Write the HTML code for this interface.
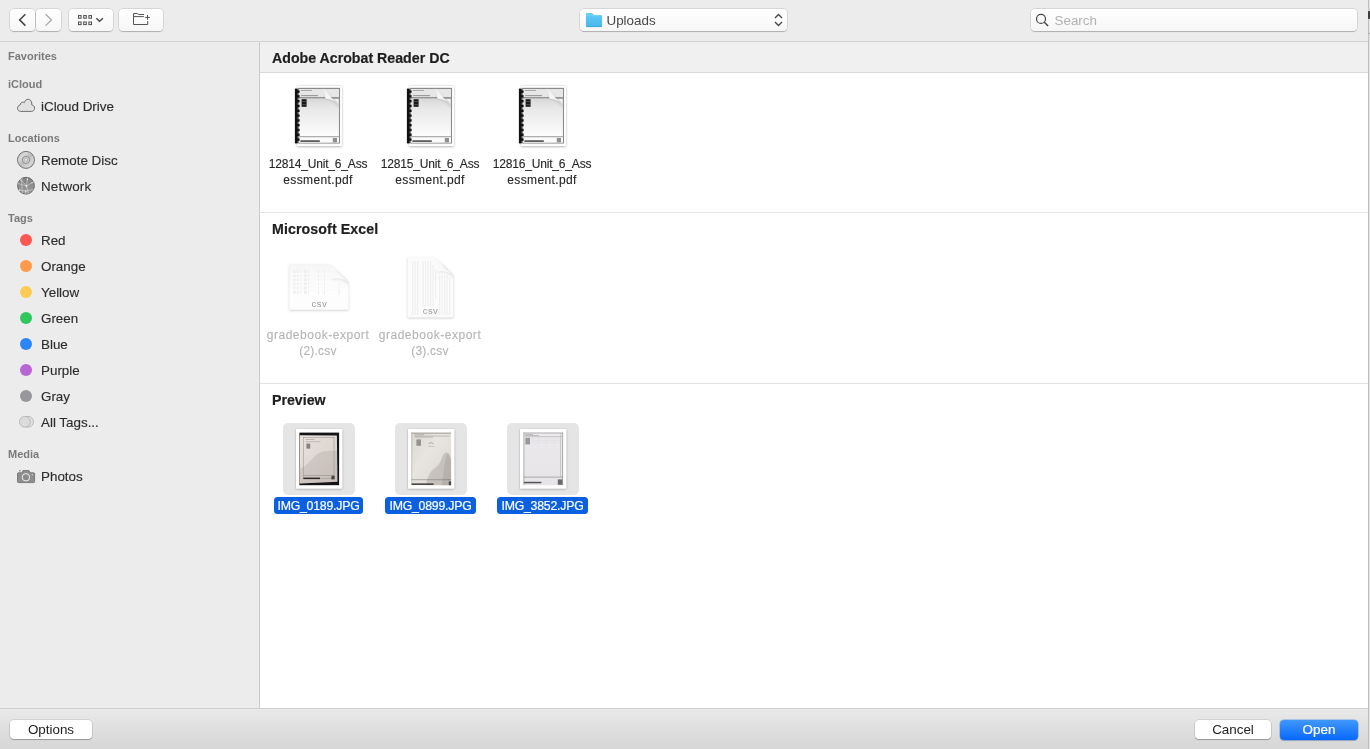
<!DOCTYPE html>
<html lang="en">
<head>
<meta charset="utf-8">
<title>Open</title>
<style>
*{box-sizing:border-box;margin:0;padding:0}
html,body{width:1370px;height:749px;overflow:hidden;background:#d8d8d8}
body{font-family:"Liberation Sans",sans-serif;color:#262626;position:relative;-webkit-font-smoothing:antialiased}
.abs{position:absolute}
#win{will-change:transform;position:absolute;left:0;top:0;width:1368px;height:749px;background:#ececec;overflow:hidden}
#edge{position:absolute;left:1368px;top:0;width:2px;height:749px;background:#e4e4e4;border-left:1px solid #c0c0c0}
/* toolbar */
#toolbar{position:absolute;left:0;top:0;width:1368px;height:41px;background:#ececec}
#tbline{position:absolute;left:0;top:41px;width:1368px;height:1px;background:#d4d4d4}
.tbtn{position:absolute;top:9px;height:22px;background:linear-gradient(#ffffff,#f6f6f6);border-radius:4px;
 box-shadow:0 0 0 .5px rgba(0,0,0,.15),0 .5px 1px rgba(0,0,0,.2)}
/* sidebar */
#sidebar{position:absolute;left:0;top:42px;width:259px;height:666px;background:#ececec}
#sbline{position:absolute;left:259px;top:42px;width:1px;height:666px;background:#cbcbcb}
.sh{position:absolute;left:8px;font-size:11px;font-weight:bold;color:#7a7a7a;line-height:14px;white-space:nowrap}
.si{position:absolute;left:41px;font-size:13.4px;color:#2d2d2d;line-height:16px;white-space:nowrap;margin-top:1px;-webkit-text-stroke:.14px #2d2d2d}
.dot{position:absolute;left:20px;width:12px;height:12px;border-radius:50%}
/* main */
#main{position:absolute;left:260px;top:42px;width:1108px;height:666px;background:#fff}
.gh{position:absolute;left:12px;font-size:14.2px;font-weight:bold;color:#1f1f1f;line-height:18px;white-space:nowrap;-webkit-text-stroke:.2px #1f1f1f}
.sep{position:absolute;left:0;width:1108px;height:1px;background:#e3e3e3}
.fl{position:absolute;width:112px;text-align:center;font-size:12px;line-height:16px;color:#262626;white-space:nowrap}
.fl i{font-style:normal;display:block}
.fl{-webkit-text-stroke:.12px #262626}
.fl.dim{color:#b4b4b4;-webkit-text-stroke:.1px #b4b4b4}
.sel{position:absolute;height:17px;border-radius:3.5px;background:#0a60df;color:#fff;font-size:12.3px;line-height:19px;text-align:center;white-space:nowrap;letter-spacing:-.22px;-webkit-text-stroke:.2px #fff;overflow:hidden}
/* bottom */
#bottom{position:absolute;left:0;top:708px;width:1368px;height:41px;background:linear-gradient(#e9e9e9,#d6d6d6);border-top:1px solid #cfcfcf}
.bbtn{position:absolute;top:720px;height:19px;border-radius:4px;background:#fff;font-size:13.4px;line-height:19px;text-align:center;color:#222;
 box-shadow:0 0 0 0.5px rgba(0,0,0,.16),0 1px 1px rgba(0,0,0,.25)}
.bbtn.pri{top:719.5px;height:20px;line-height:20px;background:linear-gradient(#4198fb,#0768fc);color:#fff;box-shadow:0 0 0 .5px rgba(0,90,230,.45),0 .5px 1px rgba(0,0,0,.15);-webkit-text-stroke:.2px #fff}
</style>
</head>
<body>
<div id="win">
  <div id="toolbar">
    <div class="tbtn" style="left:10px;width:25px"></div>
    <div class="tbtn" style="left:36px;width:25px"></div>
    <div class="tbtn" style="left:69px;width:44px"></div>
    <div class="tbtn" style="left:119px;width:44px"></div>
    <div class="tbtn" style="left:580px;width:207px"></div>
    <div class="tbtn" style="left:1031px;width:326px"></div>
    <svg class="abs" style="left:0;top:0" width="180" height="41" viewBox="0 0 180 41" fill="none" stroke-linecap="butt" stroke-linejoin="miter">
      <path d="M25.400 14.200 L19.600 19.900 L25.400 25.600" stroke="#444" stroke-width="1.500"/>
      <path d="M45.600 14.200 L51.400 19.900 L45.600 25.600" stroke="#a6a6a6" stroke-width="1.300"/>
      <g stroke="#4a4a4a" stroke-width="1">
        <rect x="78.500" y="15.600" width="2.600" height="2.600"/><rect x="83.700" y="15.600" width="2.600" height="2.600"/><rect x="88.900" y="15.600" width="2.600" height="2.600"/>
        <rect x="78.500" y="22" width="2.600" height="2.600"/><rect x="83.700" y="22" width="2.600" height="2.600"/><rect x="88.900" y="22" width="2.600" height="2.600"/>
      </g>
      <path d="M96.300 18.300 L99.600 21.300 L102.900 18.300" stroke="#4a4a4a" stroke-width="1.500"/>
      <g stroke="#555" stroke-width="1">
        <path d="M144 14.500 H138.600 L137.400 13.500 H133.500 V24.500 H147.700 V21"/>
        <path d="M134 16.600 H143.900"/>
        <path d="M145.100 17.400 H149.900 M147.500 15 V19.800"/>
      </g>
    </svg>
    <svg class="abs" style="left:580px;top:0" width="210" height="41" viewBox="0 0 210 41">
      <defs><linearGradient id="fg" x1="0" y1="0" x2="0" y2="1"><stop offset="0" stop-color="#62cdf8"/><stop offset="1" stop-color="#47b6ea"/></linearGradient></defs>
      <path d="M6 14 Q6 12.900 7.100 12.900 H11.300 Q12 12.900 12.500 13.500 L13.400 14.600 Q13.800 15.100 14.600 15.100 H21 Q22 15.100 22 16.100 V26 Q22 27 21 27 H7 Q6 27 6 26 Z" fill="url(#fg)"/>
      <path d="M6 15.600 H22" stroke="#7fd8fb" stroke-width=".6"/>
      <path d="M6.200 26.600 H21.800" stroke="#3aa4da" stroke-width=".8"/>
      <g fill="none" stroke="#484848" stroke-width="1.400"><path d="M195 17.900 L198.500 14.400 L202 17.900"/><path d="M195 22.100 L198.500 25.600 L202 22.100"/></g>
    </svg>
    <div class="abs" style="left:606.500px;top:13px;font-size:13.400px;line-height:16px;color:#484848;white-space:nowrap">Uploads</div>
    <svg class="abs" style="left:1031px;top:0" width="30" height="41" viewBox="0 0 30 41" fill="none" stroke="#444" stroke-width="1.200">
      <circle cx="10" cy="18.900" r="4.500"/><path d="M13.300 22.200 L17.100 26" stroke-width="1.400"/>
    </svg>
    <div class="abs" style="left:1054.500px;top:13px;font-size:13.400px;line-height:16px;color:#b2b2b2;white-space:nowrap">Search</div>
  </div>
  <div id="tbline"></div>

  <div id="sidebar"></div>
  <div id="sbline"></div>
  <!-- sidebar icons -->
  <svg class="abs" style="left:12px;top:94px" width="30" height="104" viewBox="12 94 30 104">
    <defs>
      <linearGradient id="dg" x1="0" y1="0" x2="1" y2="1"><stop offset="0" stop-color="#b4b4b4"/><stop offset=".28" stop-color="#d8d8d8"/><stop offset=".5" stop-color="#bcbcbc"/><stop offset=".75" stop-color="#d6d6d6"/><stop offset="1" stop-color="#b0b0b0"/></linearGradient>
      <linearGradient id="ng" x1="0" y1="0" x2="0" y2="1"><stop offset="0" stop-color="#808080"/><stop offset="1" stop-color="#9c9c9c"/></linearGradient>
    </defs>
    <path transform="translate(17,98.800)" d="M3.600 12.600 C1.500 12.600 .5 11 .5 9.500 C.5 7.800 1.600 6.500 3.100 6.200 C3.200 4.500 4.500 3.400 5.900 3.400 C6.500 3.400 7 3.500 7.400 3.800 C7.900 1.700 9.500 .5 11.100 .5 C13.300 .5 14.800 2.400 14.800 5.200 C14.800 5.500 14.800 5.700 14.700 6 C16.500 6.400 17.600 7.800 17.600 9.400 C17.600 11.200 16.300 12.600 14.400 12.600 Z" fill="#e2e2e2" stroke="#6f6f6f" stroke-width="1"/>
    <circle cx="26" cy="159.900" r="8.500" fill="url(#dg)" stroke="#747474" stroke-width="1"/>
    <circle cx="26" cy="159.900" r="3.600" fill="#d2d2d2" stroke="#858585" stroke-width=".9"/>
    <circle cx="26" cy="159.900" r="1.500" fill="#f3f3f3" stroke="#9a9a9a" stroke-width=".7"/>
    <circle cx="26" cy="185.700" r="8.400" fill="url(#ng)" stroke="#6c6c6c" stroke-width="1"/>
    <g stroke="#d6d6d6" stroke-width=".7" fill="none" opacity=".9">
      <path d="M27.500 177.500 L26.500 186 L28.500 193.600"/><path d="M18 183.500 L26.500 186 L34 181.500"/><path d="M20.500 179.500 L26.500 186"/><path d="M18.500 190 L25.800 191 L33.500 189.500"/><path d="M25.800 191 L25.600 194"/><path d="M22 178.200 Q21 185 22.500 193"/>
    </g>
    <g fill="#ececec"><circle cx="26.500" cy="186" r=".9"/><circle cx="27.500" cy="179.500" r=".7"/><circle cx="25.800" cy="191" r=".8"/><circle cx="20.800" cy="180" r=".6"/><circle cx="32" cy="182.700" r=".6"/><circle cx="19.500" cy="189.900" r=".6"/></g>
  </svg>
  <svg class="abs" style="left:12px;top:410px" width="30" height="80" viewBox="12 410 30 80">
    <circle cx="28.100" cy="421.800" r="5.400" fill="#e0e0e0" stroke="#b4b4b4" stroke-width=".9"/>
    <circle cx="24.900" cy="421.800" r="5.400" fill="#dcdcdc" stroke="#b4b4b4" stroke-width=".9"/>
    <path d="M18.400 472.800 H21.800 L23 470.500 H29 L30.200 472.800 H33.700 Q34.600 472.800 34.600 473.700 V481.700 Q34.600 482.600 33.700 482.600 H18.400 Q17.500 482.600 17.500 481.700 V473.700 Q17.500 472.800 18.400 472.800 Z" fill="#8e8e8e" stroke="#6c6c6c" stroke-width=".8"/>
    <rect x="19" y="470.400" width="1.800" height=".9" fill="#6c6c6c"/>
    <circle cx="25.900" cy="477.300" r="3.700" fill="#8a8a8a" stroke="#f2f2f2" stroke-width="1"/>
    <circle cx="32.300" cy="474.700" r=".6" fill="#e8e8e8"/>
  </svg>
  <!-- sidebar items (page coords) -->
  <div class="sh" style="top:49px">Favorites</div>
  <div class="sh" style="top:77px">iCloud</div>
  <div class="si" style="top:98px">iCloud Drive</div>
  <div class="sh" style="top:131px">Locations</div>
  <div class="si" style="top:152px">Remote Disc</div>
  <div class="si" style="top:178px;letter-spacing:.18px">Network</div>
  <div class="sh" style="top:211px">Tags</div>
  <div class="dot" style="top:234px;background:#fc5753"></div><div class="si" style="top:232px">Red</div>
  <div class="dot" style="top:260px;background:#fd9a4b"></div><div class="si" style="top:258px">Orange</div>
  <div class="dot" style="top:286px;background:#fdcb55"></div><div class="si" style="top:284px">Yellow</div>
  <div class="dot" style="top:312px;background:#30c75c"></div><div class="si" style="top:310px">Green</div>
  <div class="dot" style="top:338px;background:#2b85f7"></div><div class="si" style="top:336px">Blue</div>
  <div class="dot" style="top:364px;background:#b865d6"></div><div class="si" style="top:362px">Purple</div>
  <div class="dot" style="top:390px;background:#98989c"></div><div class="si" style="top:388px">Gray</div>
  <div class="si" style="top:414px">All Tags...</div>
  <div class="sh" style="top:447px">Media</div>
  <div class="si" style="top:468px">Photos</div>

  <div id="main"></div>
  <!-- group 1 -->
  <div class="abs" style="left:260px;top:42px;width:1108px;height:30px;background:#f0f0f0"></div>
  <div class="abs" style="left:260px;top:72px;width:1108px;height:1px;background:#d9d9d9"></div>
  <div class="gh" style="left:272px;top:49px">Adobe Acrobat Reader DC</div>
  <svg class="abs" style="left:291px;top:82px" width="56" height="70" viewBox="0 0 56 70">
    <defs>
      <linearGradient id="pg318" x1="0" y1="0" x2="0" y2="1"><stop offset="0" stop-color="#d9d9d9"/><stop offset=".3" stop-color="#e9e9e9"/><stop offset="1" stop-color="#fdfdfd"/></linearGradient>
      <linearGradient id="cl318" x1="0" y1="1" x2="1" y2="0"><stop offset="0" stop-color="#ffffff"/><stop offset=".45" stop-color="#f4f4f4"/><stop offset="1" stop-color="#cfcfcf"/></linearGradient>
      <filter id="sh318" x="-20%" y="-20%" width="140%" height="140%"><feGaussianBlur stdDeviation="1"/></filter>
    </defs>
    <rect x="6" y="4.300" width="45" height="60.500" fill="#8e8e8e" opacity=".7" filter="url(#sh318)"/>
    <rect x="6" y="4" width="45" height="60" fill="#fdfdfd"/>
    <rect x="7.6" y="6.4" width="40.8" height="54.6" fill="#f4f4f4" stroke="#858585" stroke-width="1.1"/>
    <rect x="8.2" y="7" width="39.6" height="8.6" fill="#e6e6e6"/>
    <rect x="10" y="8.2" width="11" height=".8" fill="#9a9a9a"/>
    <rect x="10" y="13.2" width="17" height=".9" fill="#8a8a8a"/>
    <rect x="8.2" y="15.3" width="39.6" height="1.3" fill="#6f6f6f"/>
    <path d="M8.6 16.6 H39 Q47.6 17.6 47.6 27 V54.4 H8.6 Z" fill="url(#pg318)"/>
    <path d="M33 16.8 Q43 17.4 48.6 26.4 L48.6 23 L36 12 Z" fill="#9a9a9a" opacity=".45" filter="url(#sh318)"/>
    <path d="M31.6 5.4 Q34.4 8 34.2 16.4 Q43.4 16.6 49 25.4 Z" fill="url(#cl318)"/>
    <rect x="10.6" y="17.2" width="5" height="7.6" fill="#1a1a1a"/>
    <rect x="10.6" y="19.4" width="5" height=".5" fill="#777"/><rect x="10.6" y="22" width="5" height=".5" fill="#777"/>
    <rect x="8.2" y="54.4" width="39.6" height="1" fill="#7d7d7d"/>
    <rect x="8.2" y="55.4" width="39.6" height="5.2" fill="#fbfbfb"/>
    <rect x="9.4" y="58.2" width="19.4" height="1.8" fill="#5e5e5e"/>
    <rect x="41.8" y="56" width="4.2" height="4.4" fill="#8f8f8f"/>
    <rect x="3.9" y="6.6" width="2.9" height="54.8" fill="#111"/>
    <g fill="#111"><rect x="6" y="8.4" width="2.6" height="2.4"/><rect x="6" y="13.2" width="2.6" height="2.4"/><rect x="6" y="18" width="2.6" height="2.4"/><rect x="6" y="22.8" width="2.6" height="2.4"/><rect x="6" y="27.6" width="2.6" height="2.4"/><rect x="6" y="32.4" width="2.6" height="2.4"/><rect x="6" y="37.2" width="2.6" height="2.4"/><rect x="6" y="42" width="2.6" height="2.4"/><rect x="6" y="46.8" width="2.6" height="2.4"/><rect x="6" y="51.6" width="2.6" height="2.4"/><rect x="6" y="56.4" width="2.6" height="2.4"/></g>
  </svg>
  <svg class="abs" style="left:403px;top:82px" width="56" height="70" viewBox="0 0 56 70">
    <defs>
      <linearGradient id="pg430" x1="0" y1="0" x2="0" y2="1"><stop offset="0" stop-color="#d9d9d9"/><stop offset=".3" stop-color="#e9e9e9"/><stop offset="1" stop-color="#fdfdfd"/></linearGradient>
      <linearGradient id="cl430" x1="0" y1="1" x2="1" y2="0"><stop offset="0" stop-color="#ffffff"/><stop offset=".45" stop-color="#f4f4f4"/><stop offset="1" stop-color="#cfcfcf"/></linearGradient>
      <filter id="sh430" x="-20%" y="-20%" width="140%" height="140%"><feGaussianBlur stdDeviation="1"/></filter>
    </defs>
    <rect x="6" y="4.300" width="45" height="60.500" fill="#8e8e8e" opacity=".7" filter="url(#sh430)"/>
    <rect x="6" y="4" width="45" height="60" fill="#fdfdfd"/>
    <rect x="7.6" y="6.4" width="40.8" height="54.6" fill="#f4f4f4" stroke="#858585" stroke-width="1.1"/>
    <rect x="8.2" y="7" width="39.6" height="8.6" fill="#e6e6e6"/>
    <rect x="10" y="8.2" width="11" height=".8" fill="#9a9a9a"/>
    <rect x="10" y="13.2" width="17" height=".9" fill="#8a8a8a"/>
    <rect x="8.2" y="15.3" width="39.6" height="1.3" fill="#6f6f6f"/>
    <path d="M8.6 16.6 H39 Q47.6 17.6 47.6 27 V54.4 H8.6 Z" fill="url(#pg430)"/>
    <path d="M33 16.8 Q43 17.4 48.6 26.4 L48.6 23 L36 12 Z" fill="#9a9a9a" opacity=".45" filter="url(#sh430)"/>
    <path d="M31.6 5.4 Q34.4 8 34.2 16.4 Q43.4 16.6 49 25.4 Z" fill="url(#cl430)"/>
    <rect x="10.6" y="17.2" width="5" height="7.6" fill="#1a1a1a"/>
    <rect x="10.6" y="19.4" width="5" height=".5" fill="#777"/><rect x="10.6" y="22" width="5" height=".5" fill="#777"/>
    <rect x="8.2" y="54.4" width="39.6" height="1" fill="#7d7d7d"/>
    <rect x="8.2" y="55.4" width="39.6" height="5.2" fill="#fbfbfb"/>
    <rect x="9.4" y="58.2" width="19.4" height="1.8" fill="#5e5e5e"/>
    <rect x="41.8" y="56" width="4.2" height="4.4" fill="#8f8f8f"/>
    <rect x="3.9" y="6.6" width="2.9" height="54.8" fill="#111"/>
    <g fill="#111"><rect x="6" y="8.4" width="2.6" height="2.4"/><rect x="6" y="13.2" width="2.6" height="2.4"/><rect x="6" y="18" width="2.6" height="2.4"/><rect x="6" y="22.8" width="2.6" height="2.4"/><rect x="6" y="27.6" width="2.6" height="2.4"/><rect x="6" y="32.4" width="2.6" height="2.4"/><rect x="6" y="37.2" width="2.6" height="2.4"/><rect x="6" y="42" width="2.6" height="2.4"/><rect x="6" y="46.8" width="2.6" height="2.4"/><rect x="6" y="51.6" width="2.6" height="2.4"/><rect x="6" y="56.4" width="2.6" height="2.4"/></g>
  </svg>
  <svg class="abs" style="left:515px;top:82px" width="56" height="70" viewBox="0 0 56 70">
    <defs>
      <linearGradient id="pg542" x1="0" y1="0" x2="0" y2="1"><stop offset="0" stop-color="#d9d9d9"/><stop offset=".3" stop-color="#e9e9e9"/><stop offset="1" stop-color="#fdfdfd"/></linearGradient>
      <linearGradient id="cl542" x1="0" y1="1" x2="1" y2="0"><stop offset="0" stop-color="#ffffff"/><stop offset=".45" stop-color="#f4f4f4"/><stop offset="1" stop-color="#cfcfcf"/></linearGradient>
      <filter id="sh542" x="-20%" y="-20%" width="140%" height="140%"><feGaussianBlur stdDeviation="1"/></filter>
    </defs>
    <rect x="6" y="4.300" width="45" height="60.500" fill="#8e8e8e" opacity=".7" filter="url(#sh542)"/>
    <rect x="6" y="4" width="45" height="60" fill="#fdfdfd"/>
    <rect x="7.6" y="6.4" width="40.8" height="54.6" fill="#f4f4f4" stroke="#858585" stroke-width="1.1"/>
    <rect x="8.2" y="7" width="39.6" height="8.6" fill="#e6e6e6"/>
    <rect x="10" y="8.2" width="11" height=".8" fill="#9a9a9a"/>
    <rect x="10" y="13.2" width="17" height=".9" fill="#8a8a8a"/>
    <rect x="8.2" y="15.3" width="39.6" height="1.3" fill="#6f6f6f"/>
    <path d="M8.6 16.6 H39 Q47.6 17.6 47.6 27 V54.4 H8.6 Z" fill="url(#pg542)"/>
    <path d="M33 16.8 Q43 17.4 48.6 26.4 L48.6 23 L36 12 Z" fill="#9a9a9a" opacity=".45" filter="url(#sh542)"/>
    <path d="M31.6 5.4 Q34.4 8 34.2 16.4 Q43.4 16.6 49 25.4 Z" fill="url(#cl542)"/>
    <rect x="10.6" y="17.2" width="5" height="7.6" fill="#1a1a1a"/>
    <rect x="10.6" y="19.4" width="5" height=".5" fill="#777"/><rect x="10.6" y="22" width="5" height=".5" fill="#777"/>
    <rect x="8.2" y="54.4" width="39.6" height="1" fill="#7d7d7d"/>
    <rect x="8.2" y="55.4" width="39.6" height="5.2" fill="#fbfbfb"/>
    <rect x="9.4" y="58.2" width="19.4" height="1.8" fill="#5e5e5e"/>
    <rect x="41.8" y="56" width="4.2" height="4.4" fill="#8f8f8f"/>
    <rect x="3.9" y="6.6" width="2.9" height="54.8" fill="#111"/>
    <g fill="#111"><rect x="6" y="8.4" width="2.6" height="2.4"/><rect x="6" y="13.2" width="2.6" height="2.4"/><rect x="6" y="18" width="2.6" height="2.4"/><rect x="6" y="22.8" width="2.6" height="2.4"/><rect x="6" y="27.6" width="2.6" height="2.4"/><rect x="6" y="32.4" width="2.6" height="2.4"/><rect x="6" y="37.2" width="2.6" height="2.4"/><rect x="6" y="42" width="2.6" height="2.4"/><rect x="6" y="46.8" width="2.6" height="2.4"/><rect x="6" y="51.6" width="2.6" height="2.4"/><rect x="6" y="56.4" width="2.6" height="2.4"/></g>
  </svg>
  <div class="fl" style="left:262px;top:155.5px"><i style="letter-spacing:-.17px">12814_Unit_6_Ass</i><i style="letter-spacing:.38px">essment.pdf</i></div>
  <div class="fl" style="left:374px;top:155.5px"><i style="letter-spacing:-.17px">12815_Unit_6_Ass</i><i style="letter-spacing:.38px">essment.pdf</i></div>
  <div class="fl" style="left:486px;top:155.5px"><i style="letter-spacing:-.17px">12816_Unit_6_Ass</i><i style="letter-spacing:.38px">essment.pdf</i></div>
  <!-- group 2 -->
  <div class="sep" style="left:260px;top:212px"></div>
  <div class="gh" style="left:272px;top:220px;letter-spacing:.1px">Microsoft Excel</div>
  <!-- csv icons -->
  <svg class="abs" style="left:285px;top:261px" width="68" height="56" viewBox="0 0 68 56">
    <defs><filter id="cs1" x="-20%" y="-20%" width="140%" height="140%"><feGaussianBlur stdDeviation="1"/></filter>
    <linearGradient id="cg1" x1="0" y1="1" x2="1" y2="0"><stop offset="0" stop-color="#fff"/><stop offset=".6" stop-color="#f6f6f6"/><stop offset="1" stop-color="#e6e6e6"/></linearGradient>
    <linearGradient id="cb1" x1="0" y1="0" x2="0" y2="1"><stop offset="0" stop-color="#f6f6f6"/><stop offset=".6" stop-color="#fdfdfd"/></linearGradient></defs>
    <path d="M4.500 3.500 H41 Q46 3.500 49 6.500 L60 17.500 Q63.500 21 63.500 27 V48.800 H4.500 Z" fill="#9c9c9c" opacity=".55" filter="url(#cs1)" transform="translate(0,.7)"/>
    <path d="M4.300 3.200 H41 Q46 3.200 49 6.200 L60.200 17.300 Q63.700 20.800 63.700 27 V48.800 H4.300 Z" fill="url(#cb1)"/>
    <g fill="#eeeeee"><rect x="8.500" y="9" width="2" height="24"/><rect x="12" y="9" width="1.500" height="24"/><rect x="15.500" y="9" width="1" height="24"/><rect x="19" y="9" width="2.500" height="24"/><rect x="23" y="9" width="1" height="24"/>
    <rect x="33" y="9" width="1" height="24"/><rect x="39" y="9" width="1" height="24"/><rect x="53.500" y="22" width="1" height="12"/></g>
    <g fill="#fbfbfb"><rect x="8" y="12" width="50" height="1.600"/><rect x="8" y="16" width="50" height="1.600"/><rect x="8" y="20" width="50" height="1.600"/><rect x="8" y="24" width="50" height="1.600"/><rect x="8" y="28" width="50" height="1.600"/></g>
    <path d="M47 19 Q57 17 63.700 24 L63.700 21 L52 10 Z" fill="#bbb" opacity=".35" filter="url(#cs1)"/>
    <path d="M43.600 3.600 Q48.600 8 47.700 17.400 Q57 16.400 62.800 21 Z" fill="url(#cg1)"/>
    <text x="34.400" y="45.700" font-family="Liberation Sans, sans-serif" font-size="9.600" fill="#9d9d9d" text-anchor="middle" letter-spacing=".4">csv</text>
  </svg>
  <svg class="abs" style="left:403px;top:253px" width="56" height="70" viewBox="0 0 56 70">
    <defs><filter id="cs2" x="-20%" y="-20%" width="140%" height="140%"><feGaussianBlur stdDeviation="1"/></filter>
    <linearGradient id="cg2" x1="0" y1="1" x2="1" y2="0"><stop offset="0" stop-color="#fff"/><stop offset=".6" stop-color="#f6f6f6"/><stop offset="1" stop-color="#e6e6e6"/></linearGradient></defs>
    <path d="M4.600 4.500 H27.500 Q32 4.500 35 7.500 L47 19.300 Q50.400 22.800 50.400 28 V64.600 H4.600 Z" fill="#9c9c9c" opacity=".55" filter="url(#cs2)" transform="translate(0,.7)"/>
    <path d="M4.500 4.200 H27.500 Q32 4.200 35 7.200 L47.100 19 Q50.500 22.500 50.500 28 V64.500 H4.500 Z" fill="#fbfbfb"/>
    <g fill="#f0f0f0"><rect x="9" y="8" width="1.200" height="54"/><rect x="11.500" y="8" width="1.200" height="54"/><rect x="14" y="8" width="1.200" height="54"/><rect x="19.500" y="8" width="1.200" height="54"/><rect x="22" y="8" width="1.200" height="54"/><rect x="24.500" y="8" width="1.200" height="54"/><rect x="27" y="8" width="1.200" height="54"/><rect x="29.500" y="12" width="1.200" height="50"/><rect x="32" y="16" width="1.200" height="30"/><rect x="36" y="22" width="1.200" height="40"/><rect x="38.500" y="22" width="1.200" height="40"/><rect x="41" y="22" width="1.200" height="40"/><rect x="43.500" y="22" width="1.200" height="40"/><rect x="46" y="24" width="1.200" height="38"/></g>
    <path d="M34.500 20 Q44 18 50.500 25 L50.500 22 L39 11 Z" fill="#bbb" opacity=".35" filter="url(#cs2)"/>
    <path d="M30.200 4.600 Q36 9 35.100 18.500 Q44 17.500 49.700 22.200 Z" fill="url(#cg2)"/>
    <rect x="19" y="54" width="16" height="7.500" fill="#fbfbfb"/>
    <text x="27.500" y="61" font-family="Liberation Sans, sans-serif" font-size="9.600" fill="#9d9d9d" text-anchor="middle" letter-spacing=".4">csv</text>
  </svg>
  <div class="fl dim" style="left:262px;top:326.5px"><i style="letter-spacing:.53px">gradebook-export</i><i style="letter-spacing:.23px">(2).csv</i></div>
  <div class="fl dim" style="left:374px;top:326.5px"><i style="letter-spacing:.53px">gradebook-export</i><i style="letter-spacing:.23px">(3).csv</i></div>
  <!-- group 3 -->
  <div class="sep" style="left:260px;top:383px"></div>
  <div class="gh" style="left:272px;top:391px">Preview</div>
  <div class="abs" style="left:283px;top:423px;width:72px;height:72px;border-radius:5px;background:#e5e5e5"></div>
  <div class="abs" style="left:395px;top:423px;width:72px;height:72px;border-radius:5px;background:#e5e5e5"></div>
  <div class="abs" style="left:507px;top:423px;width:72px;height:72px;border-radius:5px;background:#e5e5e5"></div>
  <svg class="abs" style="left:292.8px;top:425.500px" width="53" height="67" viewBox="-3 -3 53 67">
    <defs>
      <linearGradient id="pa" x1="0" y1="0" x2="1" y2="1"><stop offset="0" stop-color="#e9e3df"/><stop offset="1" stop-color="#d3cbc6"/></linearGradient>
      <linearGradient id="pb" x1="0" y1="0" x2="1" y2="1"><stop offset="0" stop-color="#dcd7d1"/><stop offset=".4" stop-color="#e8e5e1"/><stop offset="1" stop-color="#d9d4cf"/></linearGradient>
      <linearGradient id="pc" x1="0" y1="0" x2="0" y2="1"><stop offset="0" stop-color="#ebe9eb"/><stop offset="1" stop-color="#e6e4e6"/></linearGradient>
      <filter id="psa" x="-20%" y="-20%" width="140%" height="140%"><feGaussianBlur stdDeviation=".9"/></filter>
    </defs>
    <rect x="0" y=".6" width="46.400" height="59.700" fill="#7c7c7c" opacity=".6" filter="url(#psa)"/>
    <rect x="0" y="0" width="46.400" height="59.700" fill="#fff"/>
    <rect x="3.400" y="3.600" width="39.700" height="52.600" fill="#141416"/>
    <path d="M3.800 6.200 L40.900 6.600 L41.400 52.800 L3.600 54.400 Z" fill="url(#pa)"/>
    <path d="M3.700 40 Q10 37 17 29 Q22 23 30 22 Q36 21.500 41 22 L41.400 52.800 L3.600 54.400 Z" fill="#aca29d" opacity=".32"/>
    <rect x="7.600" y="8.600" width="30.400" height="41" fill="none" stroke="#8d8580" stroke-width=".45"/>
    <rect x="10.400" y="14.600" width="3.800" height="5" fill="#7d7671" opacity=".9"/>
    <rect x="9.400" y="10" width="9" height=".5" fill="#948c87"/><rect x="9.400" y="12.600" width="15" height=".5" fill="#9d9590"/>
    <rect x="7.600" y="46.400" width="30.400" height=".45" fill="#857d78"/>
    <rect x="7.400" y="48.600" width="16.600" height="1.500" fill="#2a2624"/>
    <rect x="35.400" y="46.800" width="3.200" height="3.600" fill="#4a4542"/>
  </svg>
  <svg class="abs" style="left:404.8px;top:425.500px" width="53" height="67" viewBox="-3 -3 53 67">
    <defs>
      <linearGradient id="pa" x1="0" y1="0" x2="1" y2="1"><stop offset="0" stop-color="#e9e3df"/><stop offset="1" stop-color="#d3cbc6"/></linearGradient>
      <linearGradient id="pb" x1="0" y1="0" x2="1" y2="1"><stop offset="0" stop-color="#dcd7d1"/><stop offset=".4" stop-color="#e8e5e1"/><stop offset="1" stop-color="#d9d4cf"/></linearGradient>
      <linearGradient id="pc" x1="0" y1="0" x2="0" y2="1"><stop offset="0" stop-color="#ebe9eb"/><stop offset="1" stop-color="#e6e4e6"/></linearGradient>
      <filter id="psb" x="-20%" y="-20%" width="140%" height="140%"><feGaussianBlur stdDeviation=".9"/></filter>
    </defs>
    <rect x="0" y=".6" width="46.400" height="59.700" fill="#7c7c7c" opacity=".6" filter="url(#psb)"/>
    <rect x="0" y="0" width="46.400" height="59.700" fill="#fff"/>
    <rect x="3.400" y="3.600" width="39.700" height="52.600" fill="url(#pb)"/>
    <rect x="3.400" y="3.600" width="39.700" height="1.200" fill="#9d9893" opacity=".8"/>
    <rect x="3.400" y="3.600" width=".8" height="52.600" fill="#a9a49f" opacity=".7"/>
    <path d="M18 56.200 Q19.500 44 27 39 Q31.500 36 33.500 30 Q36 22 39.500 24 Q42.500 27 43.100 32 V56.200 Z" fill="#8b8480" opacity=".30"/>
    <path d="M36 40 Q38 22 41 24 L43.100 30 V56.200 H34 Z" fill="#7d7672" opacity=".18"/>
    <rect x="6.400" y="6.800" width="35.500" height=".45" fill="#8a8580"/>
    <rect x="7" y="5.600" width="9" height=".5" fill="#8c8580"/><rect x="7" y="7.800" width="18" height=".5" fill="#958f8a"/>
    <rect x="8.400" y="10.400" width="4.600" height="6.400" fill="#8a8580" opacity=".85"/>
    <path d="M20.500 14.800 q2.500 -2.500 5 -.2" fill="none" stroke="#77726e" stroke-width=".5"/>
    <rect x="20.400" y="17.400" width="6" height=".4" fill="#9d9893"/>
    <rect x="3.400" y="50.600" width="39.700" height=".5" fill="#726d69"/>
    <rect x="3.600" y="54.400" width="22" height="1.500" fill="#3f3b38"/>
    <rect x="40.800" y="52.400" width="2.300" height="3.800" fill="#4b4744"/>
  </svg>
  <svg class="abs" style="left:516.8px;top:425.500px" width="53" height="67" viewBox="-3 -3 53 67">
    <defs>
      <linearGradient id="pa" x1="0" y1="0" x2="1" y2="1"><stop offset="0" stop-color="#e9e3df"/><stop offset="1" stop-color="#d3cbc6"/></linearGradient>
      <linearGradient id="pb" x1="0" y1="0" x2="1" y2="1"><stop offset="0" stop-color="#dcd7d1"/><stop offset=".4" stop-color="#e8e5e1"/><stop offset="1" stop-color="#d9d4cf"/></linearGradient>
      <linearGradient id="pc" x1="0" y1="0" x2="0" y2="1"><stop offset="0" stop-color="#ebe9eb"/><stop offset="1" stop-color="#e6e4e6"/></linearGradient>
      <filter id="psc" x="-20%" y="-20%" width="140%" height="140%"><feGaussianBlur stdDeviation=".9"/></filter>
    </defs>
    <rect x="0" y=".6" width="46.400" height="59.700" fill="#7c7c7c" opacity=".6" filter="url(#psc)"/>
    <rect x="0" y="0" width="46.400" height="59.700" fill="#fff"/>
    <rect x="3.400" y="3.600" width="39.700" height="52.600" fill="url(#pc)"/>
    <rect x="3.400" y="3.600" width="1" height="52.600" fill="#8c8a8e" opacity=".6"/>
    <rect x="42.300" y="3.600" width=".8" height="52.600" fill="#77757a" opacity=".7"/>
    <rect x="3.400" y="3.600" width="39.700" height=".8" fill="#8f8d91" opacity=".8"/>
    <rect x="4.600" y="7.600" width="37.500" height=".45" fill="#9a989c"/>
    <rect x="40.400" y="4" width=".45" height="44" fill="#a5a3a7"/>
    <rect x="5.400" y="8.800" width="4.600" height="6.600" fill="#8a888f" opacity=".85"/>
    <rect x="5" y="5.200" width="8" height=".5" fill="#908e92"/><rect x="5" y="6.400" width="14" height=".5" fill="#9a989c"/>
    <g fill="#dddbdf"><rect x="11" y="9.400" width="29" height=".45"/><rect x="11" y="11.400" width="29" height=".45"/><rect x="11" y="13.400" width="29" height=".45"/><rect x="18" y="8" width=".45" height="8"/><rect x="26" y="8" width=".45" height="8"/><rect x="34" y="8" width=".45" height="8"/></g>
    <rect x="3.400" y="47.800" width="39.700" height=".5" fill="#6f6d72"/>
    <rect x="3.800" y="52.800" width="17.600" height="1.500" fill="#55535a"/>
    <rect x="37.800" y="50.400" width="4.600" height="5.400" fill="#6a686d"/>
  </svg>
  <div class="sel" style="left:274px;top:497px;width:89px">IMG_0189.JPG</div>
  <div class="sel" style="left:385px;top:497px;width:91px">IMG_0899.JPG</div>
  <div class="sel" style="left:497px;top:497px;width:91px">IMG_3852.JPG</div>

  <div id="bottom"></div>
  <div class="bbtn" style="left:10px;width:82px">Options</div>
  <div class="bbtn" style="left:1195px;width:76px">Cancel</div>
  <div class="bbtn pri" style="left:1280px;width:78px">Open</div>
</div>
<div id="edge"></div>
<div class="abs" style="left:1368.400px;top:10.500px;width:1.600px;height:8px;background:#3c3c3c;border-radius:1px 0 0 1px;filter:blur(.4px)"></div>
<div class="abs" style="left:1368.600px;top:33px;width:2px;height:1px;background:#8a8a8a"></div>
</body>
</html>
